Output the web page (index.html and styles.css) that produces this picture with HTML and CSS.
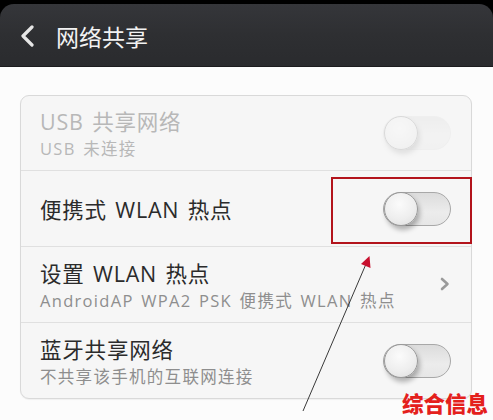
FILE: index.html
```html
<!DOCTYPE html>
<html lang="zh-CN">
<head>
<meta charset="utf-8">
<title>网络共享</title>
<link rel="stylesheet" href="styles.css">
</head>
<body>
<div class="screen">
  <header class="topbar">
    <div class="bar">
      <svg class="back" width="16" height="22" viewBox="0 0 16 22"><path d="M13 2 L4 11 L13 20" fill="none" stroke="#e6e6e6" stroke-width="3.2" stroke-linecap="round" stroke-linejoin="round"/></svg>
      <h1 class="title">网络共享</h1>
    </div>
  </header>
  <main class="content">
    <section class="card">
      <div class="row disabled">
        <div class="texts">
          <div class="label">USB 共享网络</div>
          <div class="sub">USB 未连接</div>
        </div>
        <div class="toggle faded"><span class="knob"></span></div>
      </div>
      <div class="row single">
        <div class="texts">
          <div class="label">便携式 WLAN 热点</div>
        </div>
        <div class="toggle"><span class="knob"></span></div>
      </div>
      <div class="row">
        <div class="texts">
          <div class="label">设置 WLAN 热点</div>
          <div class="sub">AndroidAP WPA2 PSK 便携式 WLAN 热点</div>
        </div>
        <svg class="chev" width="10" height="14" viewBox="0 0 10 14"><path d="M2 2 L7.5 7 L2 12" fill="none" stroke="#9a9a9a" stroke-width="2.6" stroke-linecap="round" stroke-linejoin="round"/></svg>
      </div>
      <div class="row last">
        <div class="texts">
          <div class="label">蓝牙共享网络</div>
          <div class="sub">不共享该手机的互联网连接</div>
        </div>
        <div class="toggle"><span class="knob"></span></div>
      </div>
    </section>
  </main>
  <div class="highlight"></div>
  <svg class="arrow" width="493" height="420" viewBox="0 0 493 420">
    <line x1="303" y1="411" x2="366" y2="264" stroke="#3a3a3a" stroke-width="1"/>
    <polygon points="369.5,256 370.5,268 361,264" fill="#c8102e"/>
  </svg>
  <div class="stamp">综合信息</div>
</div>
</body>
</html>
```

FILE: styles.css
```css
* { box-sizing: border-box; margin: 0; padding: 0; }

html, body {
  width: 493px;
  height: 420px;
  overflow: hidden;
  background: #fcfcfc;
  font-family: "Open Sans", "Noto Sans CJK SC", sans-serif;
}

.screen {
  position: relative;
  width: 493px;
  height: 420px;
}

.topbar {
  background: #000;
  padding-top: 4px;
}

.bar {
  height: 62px;
  background: linear-gradient(#35363a 0%, #2e2f32 50%, #2a2b2e 100%);
  border-radius: 14px 14px 0 0;
  display: flex;
  align-items: center;
  padding-left: 19px;
  box-shadow: 0 1px 0 #1c1c1e;
}

.back {
  display: block;
  margin-top: 2px;
}

.title {
  margin-left: 21px;
  font-family: "Noto Sans CJK SC", sans-serif;
  font-size: 23px;
  font-weight: 400;
  color: #f2f2f2;
  line-height: 30px;
  margin-top: 1px;
}

.content {
  padding: 29px 21px 0 20px;
}

.card {
  background: #f6f6f6;
  border: 1px solid #d9d9d9;
  border-radius: 9px;
  box-shadow: 0 1px 1px rgba(0,0,0,0.05);
}

.row {
  height: 76px;
  display: flex;
  align-items: center;
  justify-content: space-between;
  padding: 2px 20px 0 19px;
  border-bottom: 1px solid #e0e0e0;
}

.row:first-child { height: 75px; }

.row.last { border-bottom: none; height: 75px; }

.texts {
  display: flex;
  flex-direction: column;
}

.label {
  font-size: 21.5px;
  line-height: 26px;
  color: #2b2b2b;
  letter-spacing: 0.8px;
  word-spacing: 2px;
}

.sub {
  margin-top: 3px;
  font-size: 16.5px;
  line-height: 21px;
  color: #8e8e8e;
  letter-spacing: 1.3px;
  word-spacing: 2px;
}

.disabled .label,
.disabled .sub {
  color: #b8b8b8;
}

.toggle {
  position: relative;
  width: 68px;
  height: 34px;
  border-radius: 17px;
  background: linear-gradient(#dcdcdc, #ececec 60%, #e6e6e6);
  border: 1px solid #a8a8a8;
  flex: none;
  margin-top: -2px;
}

.knob {
  position: absolute;
  left: 0;
  top: -1px;
  width: 34px;
  height: 34px;
  border-radius: 50%;
  background: radial-gradient(circle at 45% 35%, #fbfbfb 0%, #eeeeee 55%, #dcdcdc 100%);
  border: 1px solid #9a9a9a;
  box-shadow: 2px 4px 5px rgba(0,0,0,0.28);
}

.toggle.faded {
  opacity: 0.3;
  border-color: #e0e0e0;
}

.chev {
  display: block;
  margin-right: 1px;
  margin-top: -4px;
}

.highlight {
  position: absolute;
  left: 331px;
  top: 177px;
  width: 141px;
  height: 67px;
  border: 2.5px solid #b3141c;
}

.arrow {
  position: absolute;
  left: 0;
  top: 0;
  pointer-events: none;
}

.stamp {
  position: absolute;
  left: 402px;
  top: 388px;
  font-family: "Noto Sans CJK SC", sans-serif;
  font-weight: 900;
  font-size: 21.5px;
  line-height: 30px;
  color: #e4201c;
}
```
